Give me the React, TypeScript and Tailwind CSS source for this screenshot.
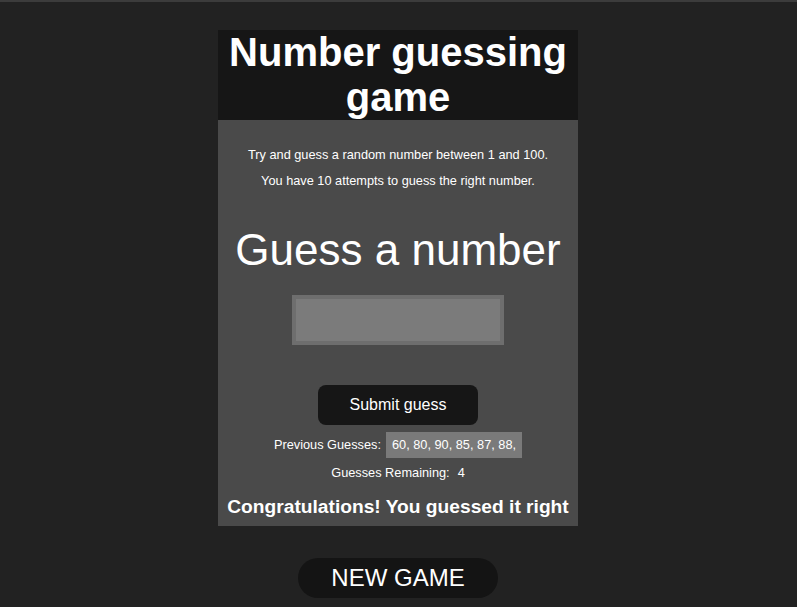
const App = () => {
  const guesses = [60, 80, 90, 85, 87, 88];
  return (
    <div className="min-h-screen bg-[#222222] border-t-2 border-[#3c3c3c] font-['Liberation_Sans',Arial,sans-serif] text-white">
      <div className="w-[360px] ml-[218px] mt-[28px] flex flex-col">
        <div className="bg-[#161616] h-[90px] flex items-center justify-center">
          <h1 className="text-[40px] leading-[45px] font-bold text-center">
            Number guessing game
          </h1>
        </div>
        <div className="bg-[#4a4a4a] flex flex-col items-center pt-[26px] pb-[7px]">
          <p className="text-[12.75px] leading-[18px]">
            Try and guess a random number between 1 and 100.
          </p>
          <p className="text-[12.75px] leading-[18px] mt-[8px]">
            You have 10 attempts to guess the right number.
          </p>
          <h2 className="text-[44px] leading-[50px] mt-[35px]">Guess a number</h2>
          <input
            type="text"
            className="mt-[20px] w-[212px] h-[50px] bg-[#7b7b7b] border-4 border-[#6e6e6e] outline-none"
          />
          <button className="mt-[40px] w-[160px] h-[40px] bg-[#161616] rounded-[8px] text-[16px]">
            Submit guess
          </button>
          <div className="mt-[7px] flex items-center gap-[5px] text-[12.75px]">
            <span>Previous Guesses:</span>
            <span className="bg-[#7a7a7a] h-[26px] px-[6px] flex items-center">
              {guesses.map((g) => `${g}, `).join("")}
            </span>
          </div>
          <div className="mt-[5px] flex items-center gap-[8px] text-[12.75px] h-[20px]">
            <span>Guesses Remaining:</span>
            <span>4</span>
          </div>
          <p className="mt-[12px] text-[19.2px] leading-[24px] font-bold">
            Congratulations! You guessed it right
          </p>
        </div>
        <button className="mt-[32px] mx-auto w-[200px] h-[40px] rounded-full bg-[#141414] text-[24px]">
          NEW GAME
        </button>
      </div>
    </div>
  );
};

export default App;
